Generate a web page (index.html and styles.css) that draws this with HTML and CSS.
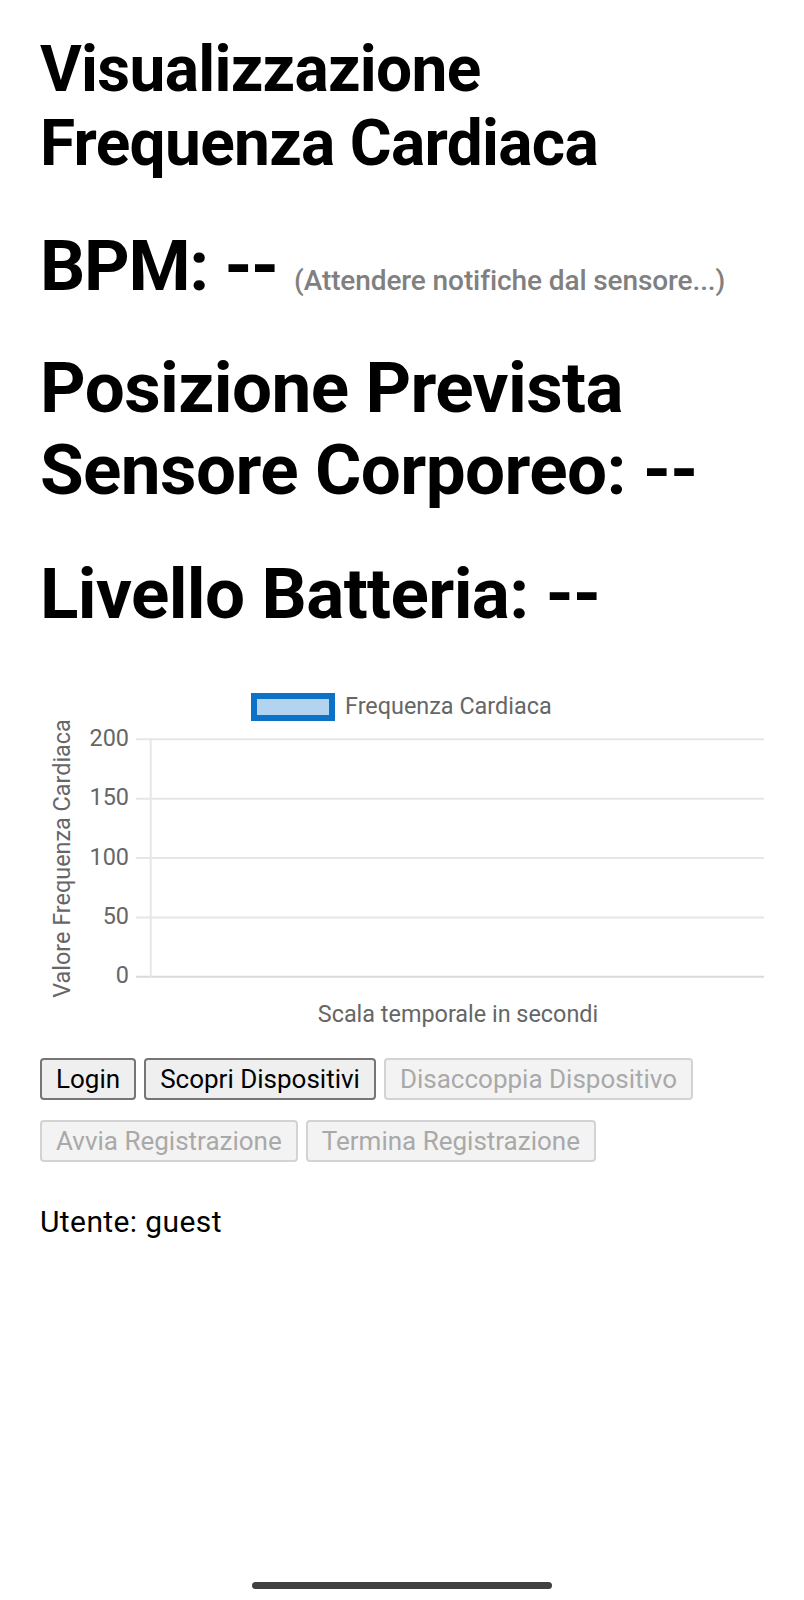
FILE: index.html
```html
<!DOCTYPE html>
<html lang="it">
<head>
<meta charset="utf-8">
<title>Visualizzazione Frequenza Cardiaca</title>
<link rel="stylesheet" href="styles.css">
</head>
<body>
<main class="page">
  <h1 class="title">Visualizzazione Frequenza Cardiaca</h1>
  <h2 class="stat stat-bpm">BPM: -- <small class="hint">(Attendere notifiche dal sensore...)</small></h2>
  <h2 class="stat stat-pos">Posizione Prevista Sensore Corporeo: --</h2>
  <h2 class="stat stat-batt">Livello Batteria: --</h2>

  <div class="chart">
    <svg class="chart-svg" width="724" height="360" viewBox="0 0 724 360" xmlns="http://www.w3.org/2000/svg">
      <g class="legend">
        <rect x="214" y="16" width="78" height="22" fill="#b3d4f1" stroke="#0b72c8" stroke-width="6"/>
        <text x="305" y="34" class="chart-text">Frequenza Cardiaca</text>
      </g>
      <g class="grid" stroke="#e6e6e6" stroke-width="2">
        <line x1="96" y1="59.3" x2="724" y2="59.3"/>
        <line x1="96" y1="118.7" x2="724" y2="118.7"/>
        <line x1="96" y1="178" x2="724" y2="178"/>
        <line x1="96" y1="237.4" x2="724" y2="237.4"/>
      </g>
      <line x1="96" y1="296.7" x2="724" y2="296.7" stroke="#d9d9d9" stroke-width="2"/>
      <line x1="110.7" y1="59.3" x2="110.7" y2="297" stroke="#e6e6e6" stroke-width="2"/>
      <g class="ticks" text-anchor="end">
        <text x="89" y="66" class="chart-text">200</text>
        <text x="89" y="125.4" class="chart-text">150</text>
        <text x="89" y="184.7" class="chart-text">100</text>
        <text x="89" y="244.1" class="chart-text">50</text>
        <text x="89" y="303.4" class="chart-text">0</text>
      </g>
      <text class="chart-text" text-anchor="middle" transform="translate(30 178.5) rotate(-90)">Valore Frequenza Cardiaca</text>
      <text class="chart-text" x="418" y="341.7" text-anchor="middle">Scala temporale in secondi</text>
    </svg>
  </div>

  <div class="buttons">
    <button class="btn" type="button">Login</button>
    <button class="btn" type="button">Scopri Dispositivi</button>
    <button class="btn" type="button" disabled>Disaccoppia Dispositivo</button>
    <button class="btn" type="button" disabled>Avvia Registrazione</button>
    <button class="btn" type="button" disabled>Termina Registrazione</button>
  </div>

  <p class="user">Utente: guest</p>
</main>
<div class="home-bar"></div>
</body>
</html>
```

FILE: styles.css
```css
html, body {
  margin: 0;
  padding: 0;
  background: #ffffff;
}

body {
  font-family: Roboto, "Noto Sans", "Liberation Sans", sans-serif;
  color: #000000;
}

.page {
  padding: 33px 40px 0;
}

.title {
  margin: 0;
  font-size: 64px;
  line-height: 74px;
  font-weight: 700;
  letter-spacing: -0.7px;
}

.stat {
  margin: 0;
  font-size: 71px;
  line-height: 82px;
  font-weight: 700;
  letter-spacing: -0.6px;
}

.stat-bpm {
  margin-top: 43px;
  line-height: 84px;
  white-space: nowrap;
  letter-spacing: -1.3px;
}

.stat-pos {
  margin-top: 39px;
}

.stat-batt {
  margin-top: 42px;
}

.hint {
  font-size: 28px;
  line-height: 1;
  font-weight: 500;
  letter-spacing: -0.1px;
  color: #808080;
}

.chart {
  margin-top: 45px;
  height: 360px;
  width: 724px;
}

.chart-svg {
  display: block;
}

.chart-text {
  font-family: Roboto, "Liberation Sans", sans-serif;
  font-size: 23.4px;
  fill: #666666;
}

.buttons {
  margin-top: 18px;
  display: flex;
  flex-wrap: wrap;
  column-gap: 8px;
  row-gap: 20px;
}

.btn {
  height: 42px;
  padding: 0 14px;
  font-family: Roboto, "Liberation Sans", sans-serif;
  font-size: 26px;
  font-weight: 400;
  color: #000000;
  background: #efefef;
  border: 2px solid #767676;
  border-radius: 4px;
}

.btn:disabled {
  color: #a9a9a9;
  background: #f3f3f3;
  border-color: #d3d3d3;
}

.user {
  margin: 42px 0 0;
  font-size: 30px;
  font-weight: 400;
  letter-spacing: 0.4px;
}

.home-bar {
  position: fixed;
  left: 252px;
  bottom: 11px;
  width: 300px;
  height: 7px;
  border-radius: 4px;
  background: #404040;
}
```
